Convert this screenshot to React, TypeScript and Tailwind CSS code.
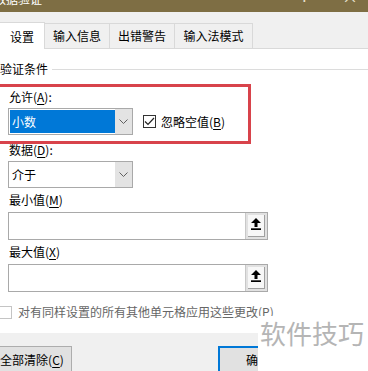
import React from "react";

const U = ({ children }: { children: React.ReactNode }) => <span className="underline underline-offset-2">{children}</span>;

const Chevron = () => (
  <svg width="9" height="5" viewBox="0 0 9 5" fill="none">
    <path d="M0.5 0.5 L4.5 4.5 L8.5 0.5" stroke="#606060" strokeWidth="1" />
  </svg>
);

const UpIcon = () => (
  <svg width="10" height="12" viewBox="0 0 10 12">
    <polygon points="5,0 10,5 6.5,5 6.5,9 3.5,9 3.5,5 0,5" fill="#000" />
    <rect x="0" y="10.3" width="10" height="1.7" fill="#000" />
  </svg>
);

function Select({ value, selected }: { value: string; selected?: boolean }) {
  return (
    <div className="ml-[8px] w-[125px] h-[27px] border border-[#a9a9a9] bg-white flex items-stretch p-[1px]">
      <div className={`flex-1 flex items-center pl-[2px] text-[12px] leading-[16px] ${selected ? "bg-[#0078d7] text-white" : "text-black"}`}>
        {value}
      </div>
      <div className="w-[17px] bg-[#e3e3e3] flex items-center justify-center -my-[1px] -mr-[1px]">
        <Chevron />
      </div>
    </div>
  );
}

function RefInput() {
  return (
    <div className="ml-[8px] w-[260px] h-[28px] border border-[#a9a9a9] bg-white flex justify-end">
      <div className="w-[22px] h-full bg-[#e1e1e1] border-l border-[#c8c8c8] p-[2px] flex">
        <div className="flex-1 bg-[#f7f7f7] border-r border-b border-[#a0a0a0] flex justify-center pt-[3px]">
          <UpIcon />
        </div>
      </div>
    </div>
  );
}

export default function App() {
  return (
    <div className="relative w-[368px] h-[371px] overflow-hidden bg-white text-black font-['Noto_Sans_CJK_SC','Noto_Sans',sans-serif]">
      {/* title bar */}
      <div className="h-[12px] bg-[#7e6e44] overflow-hidden flex text-white">
        <span className="ml-[-6px] mt-[-9px] text-[12px] leading-[16px]">数据验证</span>
        <span className="ml-auto mt-[-12px] text-[14px] leading-[16px] text-[#e8e2d0]">?</span>
        <span className="ml-[34px] mr-[10px] mt-[-12px] text-[16px] leading-[16px] text-[#e8e2d0]">×</span>
      </div>
      {/* tabs */}
      <div className="h-[37px] bg-[#f0f0f0] border-b border-[#d9d9d9] flex items-end text-[12px] leading-[16px]">
        <div className="w-[45px] h-[27px] -mb-px bg-white border-t border-r border-[#d9d9d9] flex items-center justify-center pt-[1px]">设置</div>
        <div className="w-[65px] h-[25px] border-t border-r border-[#d9d9d9] flex items-center justify-center">输入信息</div>
        <div className="w-[65px] h-[25px] border-t border-r border-[#d9d9d9] flex items-center justify-center">出错警告</div>
        <div className="w-[78px] h-[25px] border-t border-r border-[#d9d9d9] flex items-center justify-center">输入法模式</div>
      </div>
      {/* body */}
      <div className="h-[284px] bg-white flex flex-col text-[12px] leading-[16px]">
        <div className="mt-[12px] flex items-center">
          <span className="ml-[0px]">验证条件</span>
          <div className="flex-1 h-px bg-[#dcdcdc] ml-[4px]" />
        </div>
        <div className="mt-[12px] ml-[9px]">允许(<U>A</U>):</div>
        <div className="mt-[3px] flex items-center">
          <Select value="小数" selected />
          <div className="ml-[10px] w-[13px] h-[13px] border border-[#333] flex items-center justify-center">
            <svg width="11" height="9" viewBox="0 0 11 9" fill="none">
              <path d="M1 4.5 L4 7.5 L10 1" stroke="#222" strokeWidth="1.2" />
            </svg>
          </div>
          <span className="ml-[5px]">忽略空值(<U>B</U>)</span>
        </div>
        <div className="mt-[7px] ml-[9px]">数据(<U>D</U>):</div>
        <div className="mt-[3px]">
          <Select value="介于" />
        </div>
        <div className="mt-[4px] ml-[9px]">最小值(<U>M</U>)</div>
        <div className="mt-[4px]">
          <RefInput />
        </div>
        <div className="mt-[4px] ml-[9px]">最大值(<U>X</U>)</div>
        <div className="mt-[4px]">
          <RefInput />
        </div>
        <div className="mt-[12px] flex items-center text-[#666]">
          <div className="ml-[-1px] w-[13px] h-[13px] border border-[#c4c4c4] bg-white" />
          <span className="ml-[6px]">对有同样设置的所有其他单元格应用这些更改(P)</span>
        </div>
      </div>
      {/* footer */}
      <div className="h-[38px] bg-[#f0f0f0] flex items-start pt-[13px] text-[12px] leading-[16px]">
        <div className="ml-[-8px] w-[80px] h-[28px] bg-[#e1e1e1] border border-[#adadad] flex items-center justify-center">
          全部清除(<U>C</U>)
        </div>
        <div className="ml-[146px] w-[80px] h-[28px] bg-[#e1e1e1] border-2 border-[#0078d7] flex items-center justify-center">
          确定
        </div>
      </div>
      {/* red annotation */}
      <div className="absolute left-[-6px] top-[84px] w-[257px] h-[60px] border-[3px] border-[#d8434b] pointer-events-none" />
      {/* watermark */}
      <div className="absolute left-[258px] top-[316px] w-[110px] h-[55px] bg-white text-[#b5b5b5] text-[26px] leading-[34px] pl-[2px]">
        软件技巧
      </div>
    </div>
  );
}
